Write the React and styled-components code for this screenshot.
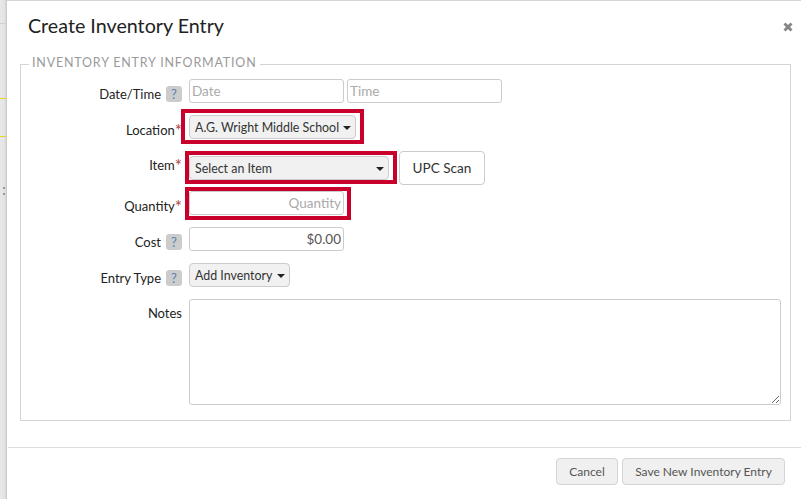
import React from 'react'
import styled, { createGlobalStyle } from 'styled-components'

const Global = createGlobalStyle`
  html, body {
    margin: 0;
    padding: 0;
    width: 801px;
    height: 499px;
    overflow: hidden;
    background: #e6e6e6;
    font-family: Lato, "Liberation Sans", sans-serif;
  }
`

const Page = styled.div`
  width: 801px;
  height: 499px;
  padding-left: 7px;
  box-sizing: border-box;
  background:
    linear-gradient(#e8d52a, #e8d52a) 0 98px / 6px 1px no-repeat,
    linear-gradient(#e8d52a, #e8d52a) 0 136px / 6px 1px no-repeat,
    linear-gradient(#d0d0d0, #d0d0d0) 0 23px / 6px 1px no-repeat,
    linear-gradient(#999, #999) 3px 187px / 2px 2px no-repeat,
    linear-gradient(#999, #999) 3px 193px / 2px 2px no-repeat,
    linear-gradient(to right, #e8e8e8 0, #e2e2e2 70%, #c4c4c4 100%) 0 0 / 7px 100% no-repeat;
`

const Modal = styled.div`
  width: 794px;
  height: 499px;
  box-sizing: border-box;
  background: #fff;
  border-top: 1px solid #d6d6d6;
  display: flex;
  flex-direction: column;
`

const Header = styled.div`
  height: 56px;
  flex: none;
  box-sizing: border-box;
  padding: 13px 8px 0 21px;
  display: flex;
  align-items: flex-start;
  justify-content: space-between;
`

const Title = styled.h3`
  margin: 0;
  font-size: 19.7px;
  line-height: 24px;
  font-weight: 400;
  color: #222;
`

const Close = styled.svg`
  width: 10px;
  height: 10px;
  margin-top: 8px;
  fill: #858585;
`

const Fieldset = styled.fieldset`
  margin: 0 10px 0 13px;
  padding: 7px 0 0 0;
  height: 364px;
  flex: none;
  box-sizing: border-box;
  border: 1px solid #d4d4d4;
  min-width: 0;
`

const Legend = styled.legend`
  margin-left: 8px;
  padding: 0 4px 4px 3px;
  font-size: 12.5px;
  line-height: 11px;
  letter-spacing: 0.8px;
  color: #9a9a9a;
  text-transform: uppercase;
`

const Row = styled.div`
  display: flex;
  align-items: flex-start;
  height: ${p => p.$h || 36}px;
`

const Label = styled.div`
  width: 161px;
  flex: none;
  display: flex;
  justify-content: flex-end;
  align-items: center;
  gap: 5px;
  height: 24px;
  margin-top: ${p => p.$top || 3}px;
  font-size: 13px;
  color: #222;
`

const Req = styled.span`
  color: #a94442;
  font-size: 17px;
  line-height: 0;
  vertical-align: -2px;
`

const Help = styled.span`
  width: 16px;
  height: 16px;
  border-radius: 3px;
  background: #ccc;
  color: #5582b4;
  font-size: 13px;
  display: inline-flex;
  align-items: center;
  justify-content: center;
`

const Controls = styled.div`
  margin-left: 7px;
  display: flex;
  gap: ${p => p.$gap || 3}px;
  align-items: flex-start;
`

const Input = styled.input`
  width: 155px;
  height: 24px;
  box-sizing: border-box;
  padding: 0 2px;
  border: 1px solid #ccc;
  border-radius: 3px;
  background: #fff;
  font: 13.5px Lato, "Liberation Sans", sans-serif;
  color: #555;
  text-align: ${p => p.$right ? 'right' : 'left'};
  outline: none;
  &::placeholder { color: #aaa; opacity: 1; }
`

const Select = styled.div`
  width: ${p => p.$w}px;
  height: 24px;
  box-sizing: border-box;
  padding: 0 4px 0 5px;
  border: 1px solid #ccc;
  border-radius: 4px;
  background: #f1f1f1;
  display: flex;
  align-items: center;
  justify-content: space-between;
  font-size: 12.4px;
  color: #333;
`

const Caret = styled.span`
  width: 0;
  height: 0;
  border-left: 4px solid transparent;
  border-right: 4px solid transparent;
  border-top: 4px solid #222;
  margin-top: 1px;
`

const Highlight = styled.div`
  border: 4px solid #c8002b;
  padding: ${p => p.$pad};
  margin-left: ${p => p.$left}px;
  display: flex;
`

const ScanButton = styled.button`
  width: 86px;
  height: 34px;
  box-sizing: border-box;
  background: #fff;
  border: 1px solid #ccc;
  border-radius: 4px;
  font: 13.6px Lato, "Liberation Sans", sans-serif;
  color: #333;
  padding: 0;
`

const Notes = styled.textarea`
  display: block;
  width: 592px;
  height: 106px;
  box-sizing: border-box;
  border: 1px solid #ccc;
  border-radius: 3px;
  background: #fff;
  outline: none;
  margin: 0;
`

const Footer = styled.div`
  margin: 26px 0 0 1px;
  border-top: 1px solid #dedede;
  padding: 10px 16px 0 0;
  display: flex;
  justify-content: flex-end;
  gap: 4px;
`

const FootButton = styled.button`
  width: ${p => p.$w}px;
  height: 27px;
  box-sizing: border-box;
  padding: 0;
  background: #f0f0f0;
  border: 1px solid #d4d4d4;
  border-radius: 4px;
  font: 12px Lato, "Liberation Sans", sans-serif;
  color: #555;
`

export default function App() {
  return (
    <Page>
      <Global />
      <Modal>
        <Header>
          <Title>Create Inventory Entry</Title>
          <Close viewBox="0 0 10 10">
            <path d="M2.5 0.5 5 3 7.5 0.5 9.5 2.5 7 5 9.5 7.5 7.5 9.5 5 7 2.5 9.5 0.5 7.5 3 5 0.5 2.5Z" />
          </Close>
        </Header>
        <Fieldset>
          <Legend>Inventory Entry Information</Legend>
          <Row $h={30}>
            <Label>Date/Time <Help>?</Help></Label>
            <Controls>
              <Input placeholder="Date" />
              <Input placeholder="Time" />
            </Controls>
          </Row>
          <Row $h={42}>
            <Label $top={9}><span>Location<Req>*</Req></span></Label>
            <Controls>
              <Highlight $left={-8} $pad="2px 4px 1px 4px">
                <Select $w={167}>A.G. Wright Middle School <Caret /></Select>
              </Highlight>
            </Controls>
          </Row>
          <Row $h={36}>
            <Label $top={2}><span>Item<Req>*</Req></span></Label>
            <Controls $gap={2}>
              <Highlight $left={-4} $pad="1px 4px 0 0">
                <Select $w={200}>Select an Item <Caret /></Select>
              </Highlight>
              <ScanButton>UPC Scan</ScanButton>
            </Controls>
          </Row>
          <Row $h={40}>
            <Label $top={7}><span>Quantity<Req>*</Req></span></Label>
            <Controls>
              <Highlight $left={-4} $pad="0 3px 1px 0">
                <Input $right placeholder="Quantity" />
              </Highlight>
            </Controls>
          </Row>
          <Row $h={36}>
            <Label>Cost <Help>?</Help></Label>
            <Controls>
              <Input $right defaultValue="$0.00" />
            </Controls>
          </Row>
          <Row $h={36}>
            <Label>Entry Type <Help>?</Help></Label>
            <Controls>
              <Select $w={101}>Add Inventory <Caret /></Select>
            </Controls>
          </Row>
          <Row $h={106}>
            <Label $top={2}>Notes</Label>
            <Controls>
              <Notes />
            </Controls>
          </Row>
        </Fieldset>
        <Footer>
          <FootButton $w={62}>Cancel</FootButton>
          <FootButton $w={163}>Save New Inventory Entry</FootButton>
        </Footer>
      </Modal>
    </Page>
  )
}
